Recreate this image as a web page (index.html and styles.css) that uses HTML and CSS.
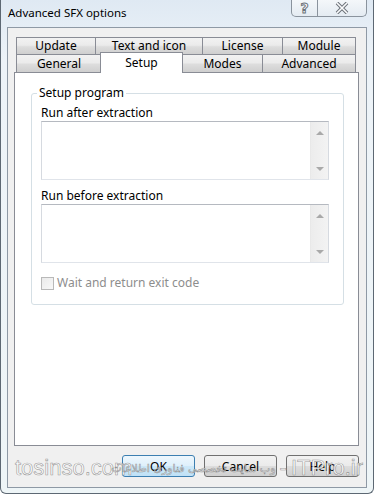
FILE: index.html
```html
<!DOCTYPE html>
<html lang="en">
<head>
  <meta charset="UTF-8" />
  <title>Advanced SFX options</title>
  <link rel="stylesheet" href="styles.css">
</head>
<body>

<div class="window">
  <div class="titlebar">
    <span class="title">Advanced SFX options</span>
    <div class="caption-btns">
      <div class="cap-btn cap-help"><span>?</span></div>
      <div class="cap-btn cap-close">
        <svg width="16" height="12" viewBox="0 0 16 12">
          <path d="M3 1 L13 11 M13 1 L3 11" stroke="#6d737a" stroke-width="3.6" fill="none"/>
          <path d="M3 1 L13 11 M13 1 L3 11" stroke="#fbfcfd" stroke-width="1.6" fill="none"/>
        </svg>
      </div>
    </div>
  </div>

  <div class="client">
    <div class="tabctl">
      <div class="tab-row back">
        <div class="tab t-update">Update</div>
        <div class="tab t-text">Text and icon</div>
        <div class="tab t-license">License</div>
        <div class="tab t-module">Module</div>
      </div>
      <div class="tab-row front">
        <div class="tab t-general">General</div>
        <div class="tab t-setup active">Setup</div>
        <div class="tab t-modes">Modes</div>
        <div class="tab t-advanced">Advanced</div>
      </div>

      <div class="panel">
        <fieldset class="group">
          <legend>Setup program</legend>
          <div class="group-body">
            <div class="field-label">Run after extraction</div>
            <div class="memo">
              <div class="memo-text"></div>
              <div class="vscroll">
                <span class="arrow up"></span>
                <span class="arrow down"></span>
              </div>
            </div>

            <div class="field-label second">Run before extraction</div>
            <div class="memo">
              <div class="memo-text"></div>
              <div class="vscroll">
                <span class="arrow up"></span>
                <span class="arrow down"></span>
              </div>
            </div>

            <label class="check disabled">
              <span class="check-box"></span>
              Wait and return exit code
            </label>
          </div>
        </fieldset>
      </div>
    </div>

    <div class="buttons">
      <button class="btn default">OK</button>
      <button class="btn">Cancel</button>
      <button class="btn">Help</button>
    </div>
  </div>

  <div class="watermark">
    <span class="wm-left">tosinso.com</span>
    <span class="wm-right">
      <span class="wm-fa" dir="rtl">وب سایت تخصصی فناوری اطلاعات</span>
      <span class="wm-dash">-</span>
      <span class="wm-site">ITPro.ir</span>
    </span>
  </div>
</div>

</body>
</html>
```

FILE: styles.css
```css
body {
  margin: 0;
  font-family: "Noto Sans", sans-serif;
  font-size: 12px;
  color: #000;
  background: #fff;
}

.window {
  position: relative;
  width: 374px;
  height: 494px;
  box-sizing: border-box;
  padding: 0 6px 5px;
  border: 1px solid #5d6873;
  border-top: 0;
  border-radius: 0 0 6px 6px;
  background: linear-gradient(#dfe9f3, #edf3f8 60px, #eef5f7);
}

.titlebar {
  height: 27px;
  display: flex;
  align-items: flex-start;
  padding-left: 1px;
}

.title {
  font-size: 11.5px;
  line-height: 16px;
  margin-top: 5px;
}

.caption-btns {
  margin-left: auto;
  display: flex;
  height: 17px;
  border: 1px solid #8a939d;
  border-top: 0;
  border-radius: 0 0 5px 5px;
  background: linear-gradient(#f4f7fa, #e4ebf2);
  box-sizing: border-box;
}

.cap-btn {
  display: flex;
  align-items: center;
  justify-content: center;
}

.cap-help {
  width: 25px;
  border-right: 1px solid #8a939d;
}

.cap-help span {
  font-family: "DejaVu Sans", sans-serif;
  font-size: 14px;
  font-weight: bold;
  line-height: 14px;
  color: #fbfcfd;
  -webkit-text-stroke: 1px #6d737a;
  margin-top: -1px;
}

.cap-close {
  width: 48px;
}

.client {
  height: 461px;
  box-sizing: border-box;
  border: 1px solid #8e99a5;
  background: #f0f0f0;
  padding: 9px 7px 0 6px;
}

/* tab control */
.tab-row {
  display: flex;
  margin: 0 3px 0 2px;
}

.tab-row.back {
  height: 17px;
}

.tab-row.front {
  height: 18px;
  position: relative;
  z-index: 1;
  align-items: flex-start;
}

.tab {
  box-sizing: border-box;
  height: 100%;
  margin-left: -1px;
  border: 1px solid #898c95;
  border-bottom: 0;
  background: linear-gradient(#f2f2f2, #ebebeb 45%, #dddddd 55%, #cfcfcf);
  display: flex;
  align-items: center;
  justify-content: center;
  line-height: 14px;
}

.tab:first-child {
  margin-left: 0;
}

.tab.active {
  position: relative;
  z-index: 2;
  height: 21px;
  margin-top: -2px;
  margin-left: -2px;
  background: #fff;
  padding-bottom: 1px;
}

.t-update { width: 80px; }
.t-text { width: 108px; }
.t-license { width: 81px; }
.t-module { width: 74px; }
.t-general { width: 86px; }
.t-setup { width: 83px; }
.t-modes { width: 81px; }
.t-advanced { width: 94px; }

.panel {
  height: 374px;
  box-sizing: border-box;
  border: 1px solid #898c95;
  background: #fff;
  padding: 12px 0 0 16px;
}

.group {
  width: 313px;
  box-sizing: border-box;
  margin: 0;
  padding: 0 14px 14px 5px;
  border: 1px solid #d5dfe5;
  border-radius: 3px;
}

.group legend {
  padding: 0 2px;
  line-height: 16px;
}

.group-body {
  padding: 5px 0 0 4px;
}

.field-label {
  line-height: 14px;
  margin-bottom: 1px;
}

.field-label.second {
  margin-top: 9px;
}

.memo {
  display: flex;
  height: 59px;
  box-sizing: border-box;
  border: 1px solid;
  border-color: #b5b9c0 #d6dae0 #e0e4ea #d6dae0;
  background: #fff;
}

.memo-text {
  flex: 1;
}

.vscroll {
  width: 17px;
  border-left: 1px solid #e8e8e8;
  background: linear-gradient(90deg, #ececec, #f3f3f3);
  display: flex;
  flex-direction: column;
  justify-content: space-between;
  align-items: center;
  padding: 9px 0 8px;
}

.arrow {
  width: 0;
  height: 0;
  border-left: 4px solid transparent;
  border-right: 4px solid transparent;
}

.arrow.up {
  border-bottom: 4px solid #a9a9a9;
}

.arrow.down {
  border-top: 4px solid #a9a9a9;
}

.check {
  display: flex;
  align-items: center;
  margin-top: 13px;
  line-height: 14px;
}

.check.disabled {
  color: #8d8d8d;
}

.check-box {
  width: 13px;
  height: 13px;
  box-sizing: border-box;
  border: 1px solid #b9b9b9;
  background: linear-gradient(135deg, #eaeaea, #f8f8f8);
  margin-right: 3px;
}

/* dialog buttons */
.buttons {
  display: flex;
  justify-content: flex-end;
  gap: 9px;
  margin-top: 9px;
}

.btn {
  width: 73px;
  height: 22px;
  font-family: "Noto Sans", sans-serif;
  font-size: 12px;
  color: #000;
  border: 1px solid #707070;
  border-radius: 3px;
  background: linear-gradient(#f2f2f2, #ebebeb 48%, #dddddd 52%, #cfcfcf);
  padding: 0;
}

.btn.default {
  border-color: #3c7fb1;
  background: linear-gradient(#eef7fd, #dff0fb 48%, #cde8f8 52%, #bfe1f6);
}

/* watermark over the bottom of the dialog */
.watermark {
  position: absolute;
  left: 14px;
  right: 10px;
  bottom: 12px;
  height: 26px;
  white-space: nowrap;
  pointer-events: none;
  color: rgba(255, 255, 255, 0.85);
  -webkit-text-stroke: 0.6px rgba(110, 110, 110, 0.7);
}

.wm-left {
  position: absolute;
  left: 0;
  top: 0;
  font-family: "Liberation Sans", sans-serif;
  font-size: 22px;
}

.wm-right {
  position: absolute;
  right: 0;
  top: 0;
  display: flex;
  align-items: center;
  gap: 4px;
}

.wm-fa {
  font-family: "DejaVu Sans", sans-serif;
  font-size: 11px;
}

.wm-dash,
.wm-site {
  font-family: "Liberation Sans", sans-serif;
  font-size: 22px;
}
```
